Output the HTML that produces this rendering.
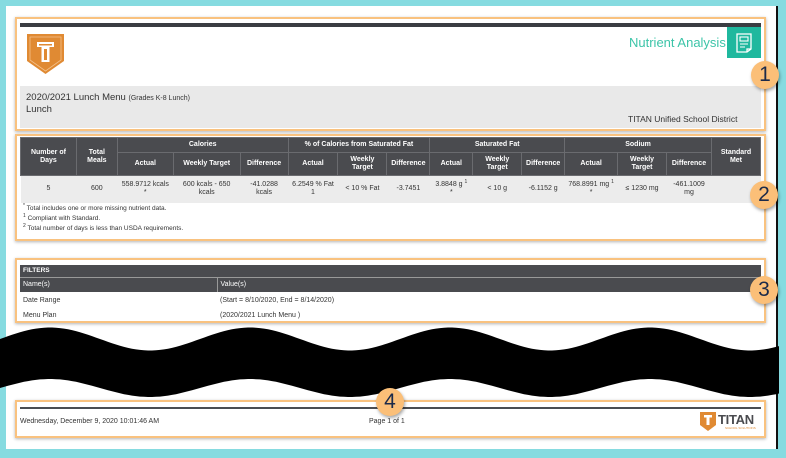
<!DOCTYPE html>
<html><head><meta charset="utf-8"><style>
*{margin:0;padding:0;box-sizing:border-box}
body{width:786px;height:458px;background:#86dbe0;position:relative;overflow:hidden;font-family:"Liberation Sans",sans-serif;color:#333}
.page{position:absolute;left:6px;top:6px;width:772px;height:443px;background:#fff;border-right:2px solid #111}
.box{position:absolute;border:2px solid #f9c27f;box-shadow:0 1px 3px rgba(0,0,0,.3);background:#fff}
.badge{position:absolute;width:28px;height:28px;border-radius:50%;background:#fbbf78;box-shadow:1px 2px 3px rgba(0,0,0,.35);color:#1b2a4a;font-size:21px;text-align:center;line-height:28px}
table{border-collapse:collapse;position:absolute}
.nt td,.nt th{font-size:7px;text-align:center;vertical-align:middle;border:1px solid #777;padding:0 1px;line-height:8px}
.nt th{background:#4a4b4f;color:#fff;font-weight:bold;border-color:#6a6b6f}
.nt td{background:#ececec;border:none;color:#333}
sup{font-size:5px;line-height:0;vertical-align:3px}
.ft td{font-size:7px;padding:0 3px;text-align:left}
.abs{position:absolute;white-space:nowrap}
</style></head><body>
<div class="page"></div>

<!-- Box 1 -->
<div class="box" style="left:15px;top:17px;width:751px;height:114px"></div>
<div class="abs" style="left:20px;top:23px;width:741px;height:4px;background:#3a3d42"></div>
<svg class="abs" style="left:27px;top:34px" width="37" height="40" viewBox="0 0 37 40">
<path d="M0 0H37V27L18.5 40L0 27Z" fill="#e08a33"/>
<path d="M3 3H34V26L18.5 37L3 26Z" fill="none" stroke="#f3c08a" stroke-width="0.8"/>
<rect x="10" y="8" width="17" height="5" fill="#fff"/><rect x="14.5" y="13" width="8" height="15" fill="#fff"/>
<rect x="17" y="15" width="3" height="11" fill="#e08a33"/><rect x="12" y="10" width="13" height="1.5" fill="#e08a33"/>
</svg>
<div class="abs" style="left:629px;top:35px;font-size:13px;color:#3cc4a8">Nutrient Analysis</div>
<div class="abs" style="left:727px;top:27px;width:34px;height:31px;background:#1fb89e"></div>
<svg class="abs" style="left:727px;top:27px" width="34" height="31" viewBox="0 0 34 31">
<path d="M10 7H24V22L20 25H10Z M20 25V22H24" fill="none" stroke="#fff" stroke-width="1.3"/>
<rect x="13" y="10" width="8" height="4" fill="none" stroke="#fff" stroke-width="1.1"/>
<path d="M13 17H21M13 20H18" stroke="#fff" stroke-width="1.1"/>
</svg>
<div class="abs" style="left:20px;top:86px;width:741px;height:42px;background:#e9e9e9"></div>
<div class="abs" style="left:26px;top:92px;font-size:9.5px;color:#333">2020/2021 Lunch Menu <span style="font-size:7px">(Grades K-8 Lunch)</span></div>
<div class="abs" style="left:26px;top:104px;font-size:9.5px;color:#333">Lunch</div>
<div class="abs" style="left:628px;top:114px;font-size:8.5px;color:#333">TITAN Unified School District</div>
<div class="badge" style="left:751px;top:61px">1</div>

<!-- Box 2 -->
<div class="box" style="left:15px;top:134px;width:751px;height:107px"></div>
<table class="nt" style="left:20px;top:137px;width:741px">
<colgroup><col style="width:56px"><col style="width:41px"><col style="width:56px"><col style="width:67px"><col style="width:48px"><col style="width:50px"><col style="width:49px"><col style="width:43px"><col style="width:43px"><col style="width:49px"><col style="width:43px"><col style="width:53px"><col style="width:49px"><col style="width:45px"><col style="width:49px"></colgroup>
<tr style="height:15px"><th rowspan="2">Number of<br>Days</th><th rowspan="2">Total<br>Meals</th><th colspan="3">Calories</th><th colspan="3">% of Calories from Saturated Fat</th><th colspan="3">Saturated Fat</th><th colspan="3">Sodium</th><th rowspan="2">Standard<br>Met</th></tr>
<tr style="height:23px"><th>Actual</th><th>Weekly Target</th><th>Difference</th><th>Actual</th><th>Weekly<br>Target</th><th>Difference</th><th>Actual</th><th>Weekly<br>Target</th><th>Difference</th><th>Actual</th><th>Weekly<br>Target</th><th>Difference</th></tr>
<tr style="height:27px"><td>5</td><td>600</td><td>558.9712 kcals<br>*</td><td>600 kcals - 650<br>kcals</td><td>-41.0288<br>kcals</td><td>6.2549 % Fat<br>1</td><td>&lt; 10 % Fat</td><td>-3.7451</td><td>3.8848 g <sup>1</sup><br>*</td><td>&lt; 10 g</td><td>-6.1152 g</td><td>768.8991 mg <sup>1</sup><br>*</td><td>≤ 1230 mg</td><td>-461.1009<br>mg</td><td></td></tr>
</table>
<div class="abs" style="left:23px;top:204px;font-size:6.5px;line-height:10px;color:#333"><sup>*</sup> Total includes one or more missing nutrient data.<br><sup>1</sup> Compliant with Standard.<br><sup>2</sup> Total number of days is less than USDA requirements.</div>
<div class="badge" style="left:750px;top:181px">2</div>

<!-- Box 3 -->
<div class="box" style="left:15px;top:258px;width:751px;height:65px"></div>
<table class="ft" style="left:20px;top:265px;width:741px">
<colgroup><col style="width:197px"><col></colgroup>
<tr style="height:12px;background:#4a4b4f;color:#fff;font-weight:bold"><td colspan="2" style="font-weight:bold;font-size:6.5px">FILTERS</td></tr>
<tr style="height:15px;background:#4a4b4f;color:#fff"><td style="border-right:1px solid #999;border-top:1px solid #999">Name(s)</td><td style="border-top:1px solid #999">Value(s)</td></tr>
<tr style="height:16px"><td>Date Range</td><td>(Start = 8/10/2020, End = 8/14/2020)</td></tr>
<tr style="height:14px"><td>Menu Plan</td><td>(2020/2021 Lunch Menu )</td></tr>
</table>
<div class="badge" style="left:750px;top:276px">3</div>

<!-- wave -->
<svg class="abs" style="left:0;top:320px" width="779" height="90" viewBox="0 320 779 90">
<path id="w" fill="#000" d="" />
</svg>
<script>
(function(){var a=[],b=[];for(var x=0;x<=780;x+=4){var c=Math.cos(2*Math.PI*(x-50)/200);a.push(x+' '+(339-11.5*c).toFixed(1));b.push(x+' '+(388-9*c).toFixed(1));}
document.getElementById('w').setAttribute('d','M'+a.join(' L')+' L'+b.reverse().join(' L')+'Z');})();
</script>

<!-- Box 4 -->
<div class="box" style="left:15px;top:400px;width:751px;height:38px"></div>
<div class="abs" style="left:20px;top:407px;width:741px;height:2px;background:#4a4d52"></div>
<div class="abs" style="left:20px;top:418px;font-size:7px;color:#333">Wednesday, December 9, 2020 10:01:46 AM</div>
<div class="abs" style="left:369px;top:418px;font-size:7px;color:#333">Page 1 of 1</div>
<svg class="abs" style="left:700px;top:412px" width="16" height="19" viewBox="0 0 16 19"><path d="M0 0H16V13L8 19L0 13Z" fill="#e08a33"/><rect x="4" y="3" width="8" height="2.5" fill="#fff"/><rect x="6.5" y="5" width="3" height="8" fill="#fff"/></svg>
<div class="abs" style="left:718px;top:412px;font-size:13px;font-weight:bold;color:#4a4b4f;letter-spacing:-0.3px">TITAN</div>
<div class="abs" style="left:725px;top:426px;font-size:3px;color:#e08a33">SCHOOL SOLUTIONS</div>
<div class="badge" style="left:376px;top:388px">4</div>
</body></html>
